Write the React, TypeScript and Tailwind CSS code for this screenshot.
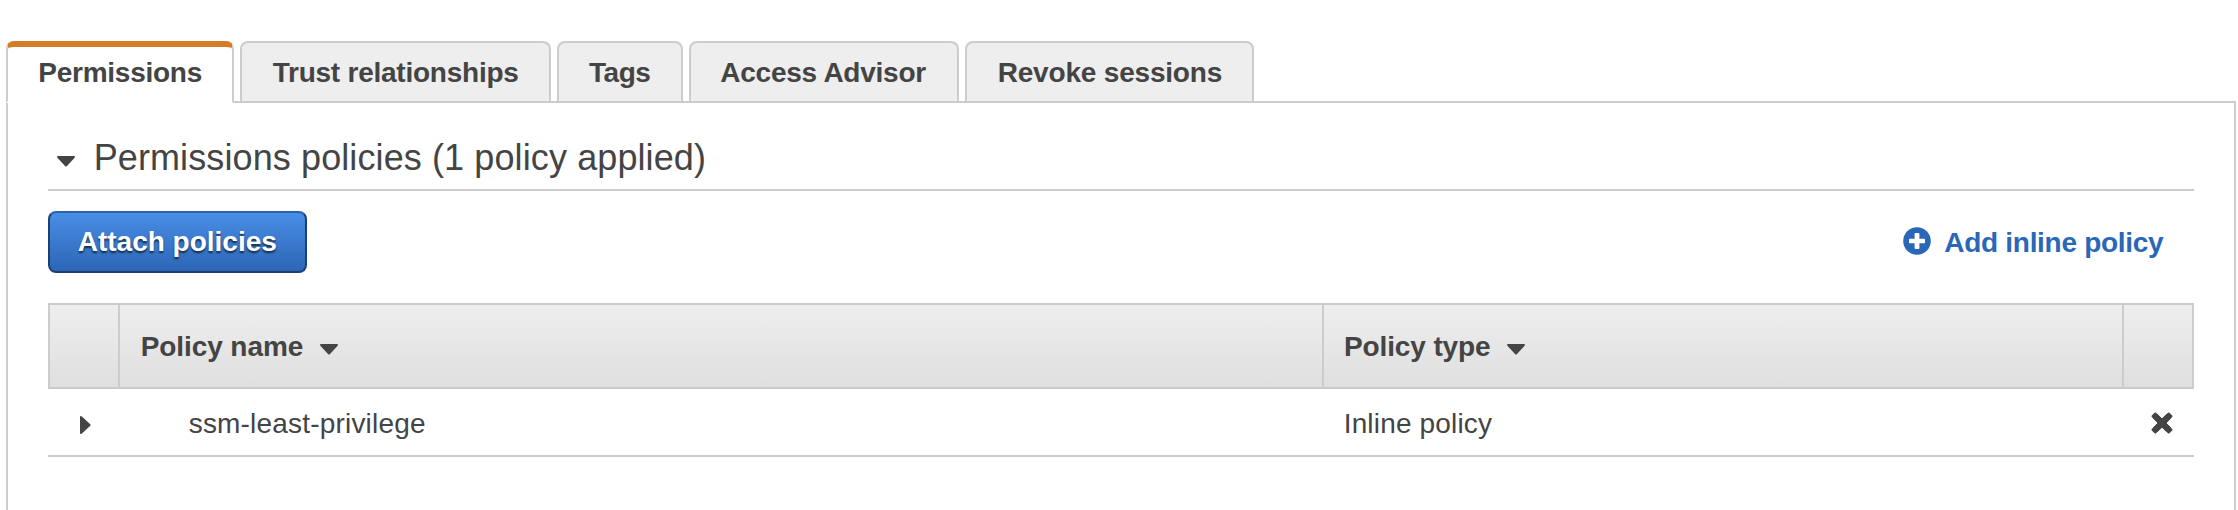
import React from "react";

type Tab = { label: string; active?: boolean; className: string };

const tabs: Tab[] = [
  { label: "Permissions", active: true, className: "w-[228px] pl-[30.3px] tracking-[-0.255px]" },
  { label: "Trust relationships", className: "w-[311px] pl-[30.7px] tracking-[-0.24px]" },
  { label: "Tags", className: "w-[126px] pl-[30px] tracking-[-0.46px]" },
  { label: "Access Advisor", className: "w-[270px] pl-[29.3px] tracking-[-0.247px]" },
  { label: "Revoke sessions", className: "w-[289px] pl-[30.7px] tracking-[-0.19px]" },
];

function CaretDown({ className }: { className: string }) {
  return (
    <svg className={className} width="18" height="11" viewBox="0 0 18 11" fill="#444444">
      <path d="M1 0H17Q18 0 18 .8Q18 1.3 17.4 1.9L10 10Q9 11.1 8 10L.6 1.9Q0 1.3 0 .8Q0 0 1 0Z" />
    </svg>
  );
}

function CaretRight({ className }: { className: string }) {
  return (
    <svg className={className} width="11" height="18" viewBox="0 0 11 18" fill="#444444">
      <path d="M0 1V17Q0 18 .8 18Q1.3 18 1.9 17.4L10 10Q11.1 9 10 8L1.9 .6Q1.3 0 .8 0Q0 0 0 1Z" />
    </svg>
  );
}

function PlusCircle() {
  return (
    <svg className="mt-[16px] shrink-0" width="28" height="28" viewBox="0 0 28 28">
      <circle cx="14" cy="14" r="13.8" fill="#2a67b7" />
      <path
        d="M12.5 6H15.5Q16.4 6 16.4 6.9V11.7H21.1Q22 11.7 22 12.6V15.4Q22 16.3 21.1 16.3H16.4V21.1Q16.4 22 15.5 22H12.5Q11.6 22 11.6 21.1V16.3H6.9Q6 16.3 6 15.4V12.6Q6 11.7 6.9 11.7H11.6V6.9Q11.6 6 12.5 6Z"
        fill="#ffffff"
      />
    </svg>
  );
}

function RemoveIcon() {
  return (
    <svg className="ml-[29px] mt-[23px]" width="22" height="22" viewBox="0 0 22 22">
      <path d="M4.2 4.2L17.8 17.8M17.8 4.2L4.2 17.8" stroke="#444444" strokeWidth="6" fill="none" />
      <path
        d="M4.2 4.2L17.8 17.8M17.8 4.2L4.2 17.8"
        stroke="#444444"
        strokeWidth="5"
        strokeLinejoin="round"
        strokeLinecap="round"
        fill="none"
      />
      <path
        d="M3.6 .8Q4.3 .1 5 .8L11 6.6L17 .8Q17.7 .1 18.4 .8L21.2 3.6Q21.9 4.3 21.2 5L15.4 11L21.2 17Q21.9 17.7 21.2 18.4L18.4 21.2Q17.7 21.9 17 21.2L11 15.4L5 21.2Q4.3 21.9 3.6 21.2L.8 18.4Q.1 17.7 .8 17L6.6 11L.8 5Q.1 4.3 .8 3.6Z"
        fill="#444444"
      />
    </svg>
  );
}

export default function App() {
  return (
    <div className="h-[510px] w-[2238px] overflow-hidden bg-white pl-[6px] pt-[41px] font-['Liberation_Sans',Arial,sans-serif] text-[28px] leading-[31px] whitespace-nowrap text-[#444444]">
      <nav className="flex h-[60px] items-start gap-[6px] font-bold">
        {tabs.map((tab) =>
          tab.active ? (
            <div
              key={tab.label}
              className={`relative z-10 h-[62px] shrink-0 rounded-t-[8px] rounded-br-[3px] border-x-2 border-t-[6px] border-b-2 border-x-[#cccccc] border-t-[#d57c29] border-b-white bg-white pt-[10px] ${tab.className}`}
            >
              {tab.label}
            </div>
          ) : (
            <div
              key={tab.label}
              className={`h-[60px] shrink-0 rounded-t-[8px] border-x-2 border-t-2 border-[#cccccc] bg-[#eeeeee] pt-[14px] ${tab.className}`}
            >
              {tab.label}
            </div>
          ),
        )}
      </nav>

      <main className="h-[440px] w-[2230px] border-2 border-[#cccccc] px-[40px]">
        <h2 className="flex h-[88px] items-start border-b-2 border-[#cccccc] pt-[34px] text-[36px] leading-[41px] font-normal tracking-[0.106px]">
          <CaretDown className="mt-[19px] ml-[9px] shrink-0" />
          <span className="ml-[18.7px]">Permissions policies (1 policy applied)</span>
        </h2>

        <div className="mt-[20px] flex h-[62px] items-start justify-between font-bold">
          <button className="h-[62px] w-[259px] rounded-[8px] border-2 border-[#1c4074] border-t-[#2b62ae] bg-linear-to-b from-[#4a8fe8] to-[#2b65b4] bg-origin-border pb-[2px] pl-[27.7px] text-left font-bold text-white [text-shadow:0_2px_2px_rgba(0,0,0,0.65)]">
            Attach policies
          </button>
          <a className="flex items-start pr-[25.7px] text-[#2a67b7]">
            <PlusCircle />
            <span className="mt-[16px] ml-[13.3px] w-[224px] tracking-[-0.296px]">Add inline policy</span>
          </a>
        </div>

        <div className="mt-[30px] grid h-[86px] grid-cols-[70px_1204px_800px_72px] border-y-2 border-[#cccccc] bg-linear-to-b from-[#eeeeee] to-[#dfdfdf] font-bold">
          <div className="border-l-2 border-[#cccccc]" />
          <div className="flex items-start border-l-2 border-[#cccccc] pl-[20.7px]">
            <span className="mt-[26px] w-[179.3px] tracking-[-0.083px]">Policy name</span>
            <CaretDown className="mt-[39px]" />
          </div>
          <div className="flex items-start border-l-2 border-[#cccccc] pl-[20px]">
            <span className="mt-[26px] w-[163px] tracking-[-0.126px]">Policy type</span>
            <CaretDown className="mt-[39px]" />
          </div>
          <div className="border-x-2 border-[#cccccc]" />
        </div>

        <div className="grid h-[68px] grid-cols-[70px_1204px_800px_72px] border-b-2 border-[#cccccc]">
          <div>
            <CaretRight className="mt-[27px] ml-[32px]" />
          </div>
          <div className="pt-[19px] pl-[70.7px] tracking-[0.193px]">ssm-least-privilege</div>
          <div className="pt-[19px] pl-[21.7px] tracking-[0.166px]">Inline policy</div>
          <div>
            <RemoveIcon />
          </div>
        </div>
      </main>
    </div>
  );
}
